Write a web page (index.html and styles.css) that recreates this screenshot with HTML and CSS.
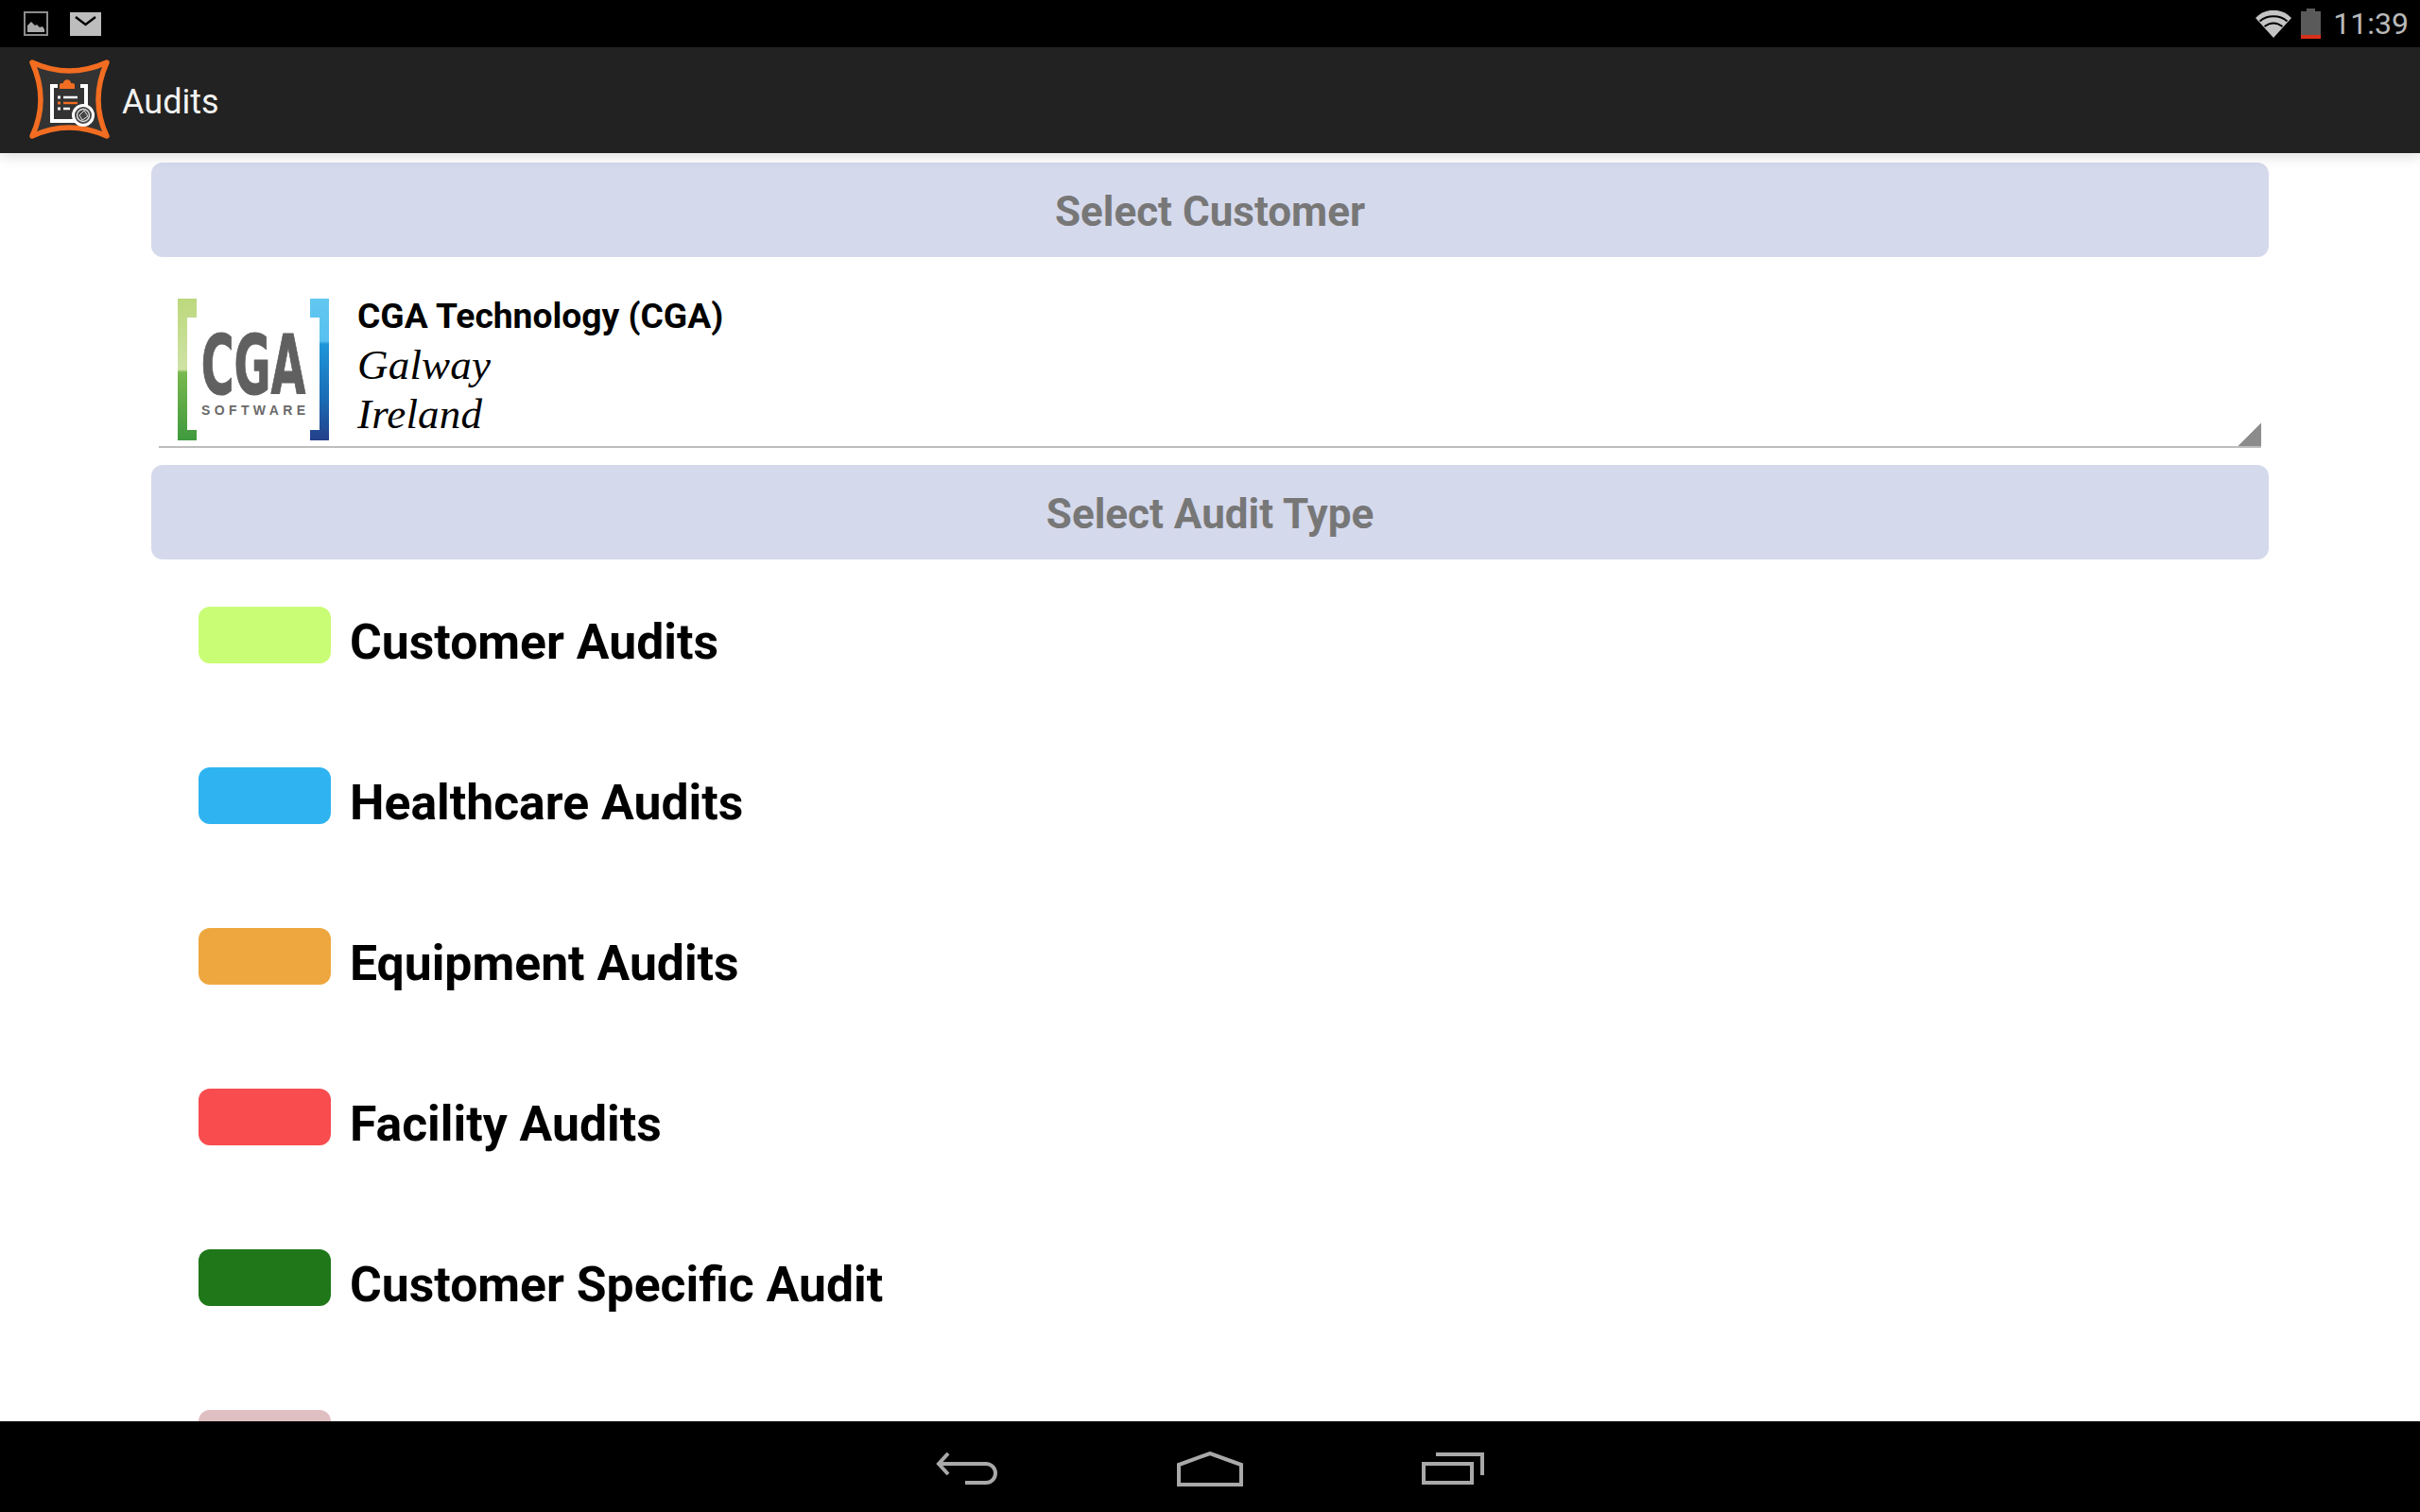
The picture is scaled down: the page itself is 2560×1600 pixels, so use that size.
FILE: index.html
```html
<!DOCTYPE html>
<html lang="en">
<head>
<meta charset="utf-8">
<title>Audits</title>
<link rel="stylesheet" href="styles.css">
</head>
<body>
<div class="screen">
  <header class="status">
    <div class="status-left">
      <svg class="ico-pic" viewBox="0 0 26 26"><rect x="1" y="1" width="24" height="24" fill="none" stroke="#8c8c8c" stroke-width="2"/><path d="M4 22v-7l4-4 4 4 2-1 3 3 3-1 2 3v3z" fill="#aaa"/></svg>
      <svg class="ico-mail" viewBox="0 0 33 25"><path d="M0 0h33v25H0z" fill="#bdbdbd"/><path d="M6 5l10.500 8L27 5" fill="none" stroke="#000" stroke-width="2.400"/></svg>
    </div>
    <div class="status-right">
      <svg class="ico-wifi" viewBox="0 0 38 29"><path d="M19 29L0 8c10-11 28-11 38 0z" fill="#c4c4c4"/><path d="M4.500 11.500c8-7 21-7 29 0M9.500 17c6-4.500 13-4.500 19 0" fill="none" stroke="#000" stroke-width="2"/></svg>
      <svg class="ico-batt" viewBox="0 0 21 32"><path d="M6 0h9v3h6v29H0V3h6z" fill="#5a5a5a"/><path d="M0 28h21v4H0z" fill="#d9301a"/></svg>
      <span class="clock">11:39</span>
    </div>
  </header>
  <div class="appbar">
    <svg class="app-icon" viewBox="0 0 86 86">
      <path d="M4 3Q43 21 83 3Q65 43 83 81Q43 63 4 81Q22 43 4 3z" fill="#333" stroke="#f26d21" stroke-width="5.500" stroke-linejoin="round"/>
      <path d="M31 28h-6v37h36V28h-6" fill="none" stroke="#fff" stroke-width="4"/>
      <path d="M33 31v-4c0-2 2-2 4-2 0-5 8-5 8 0 2 0 4 0 4 2v4z" fill="#f26d21"/>
      <path d="M31 38.500h3v3h-3zM31 50.500h3v3h-3z" fill="#fff"/><path d="M31 44.500h3v3h-3z" fill="#f26d21"/>
      <path d="M37 40h15M37 52h7" stroke="#fff" stroke-width="2.400"/><path d="M37 46h15" stroke="#f26d21" stroke-width="2.400"/>
      <circle cx="58" cy="59" r="10.500" fill="#444" stroke="#fff" stroke-width="3"/><circle cx="58" cy="59" r="6.500" fill="none" stroke="#ddd" stroke-width="1.400"/><path d="M54 59l5-5 4 6-6 4z" fill="none" stroke="#ddd" stroke-width="1"/>
    </svg>
    <span class="app-title">Audits</span>
  </div>
  <main class="content">
    <div class="band">Select Customer</div>
    <div class="spinner">
      <svg class="logo" viewBox="0 0 160 150">
        <defs>
          <linearGradient id="gl" x1="0" y1="0" x2="0" y2="1"><stop offset="0" stop-color="#bcd87c"/><stop offset=".5" stop-color="#cfe3a6"/><stop offset=".52" stop-color="#79b84e"/><stop offset="1" stop-color="#3f9a3e"/></linearGradient>
          <linearGradient id="gr" x1="0" y1="0" x2="0" y2="1"><stop offset="0" stop-color="#62c8f0"/><stop offset=".3" stop-color="#58c0f0"/><stop offset=".32" stop-color="#1f96da"/><stop offset=".7" stop-color="#1a6db5"/><stop offset="1" stop-color="#243f8a"/></linearGradient>
        </defs>
        <path d="M0 0h20v20H10v119h10v11H0z" fill="url(#gl)"/>
        <path d="M160 0h-20v20h10v119h-10v11h20z" fill="url(#gr)"/>
        <text class="logo-cga" transform="translate(80 101) scale(1.080 2)" text-anchor="middle">CGA</text>
        <text class="logo-soft" x="80" y="123" text-anchor="middle" textLength="110">SOFTWARE</text>
      </svg>
      <div class="cust-text">
        <div class="cust-name">CGA Technology (CGA)</div>
        <div class="cust-line">Galway</div>
        <div class="cust-line">Ireland</div>
      </div>
      <span class="spin-arrow"></span>
    </div>
    <div class="band band-second">Select Audit Type</div>
    <ul class="audits">
      <li class="audit"><span class="swatch c-lime"></span><span class="audit-name">Customer Audits</span></li>
      <li class="audit"><span class="swatch c-blue"></span><span class="audit-name">Healthcare Audits</span></li>
      <li class="audit"><span class="swatch c-orange"></span><span class="audit-name">Equipment Audits</span></li>
      <li class="audit"><span class="swatch c-red"></span><span class="audit-name">Facility Audits</span></li>
      <li class="audit"><span class="swatch c-green"></span><span class="audit-name">Customer Specific Audit</span></li>
      <li class="audit"><span class="swatch c-pink"></span></li>
    </ul>
  </main>
  <nav class="navbar">
    <svg class="nav-back" viewBox="0 0 66 34"><path d="M13 1L3 12l10 11M3 12h50a9.500 9.500 0 0 1 0 20H31" fill="none" stroke="#a9a9a9" stroke-width="4"/></svg>
    <svg class="nav-home" viewBox="0 0 70 37"><path d="M2 35V14L35 2l33 12v21z" fill="none" stroke="#a9a9a9" stroke-width="4"/></svg>
    <svg class="nav-recent" viewBox="0 0 66 34"><path d="M2 12h51v20H2z" fill="none" stroke="#a9a9a9" stroke-width="4"/><path d="M15 2h49v22" fill="none" stroke="#a9a9a9" stroke-width="4"/></svg>
  </nav>
</div>
</body>
</html>
```
FILE: styles.css
```css
* { box-sizing: border-box; }
html, body { margin: 0; padding: 0; background: #fff; }
.screen { width: 2560px; height: 1600px; display: flex; flex-direction: column; overflow: hidden; font-family: Roboto, sans-serif; }

.status { height: 50px; flex: none; background: #000; display: flex; justify-content: space-between; align-items: center; padding: 0 12px 0 25px; }
.status-left { display: flex; align-items: center; gap: 23px; }
.ico-pic { width: 26px; height: 26px; }
.ico-mail { width: 33px; height: 25px; }
.status-right { display: flex; align-items: center; }
.ico-wifi { width: 38px; height: 29px; margin-right: 10px; }
.ico-batt { width: 21px; height: 32px; margin-right: 13px; }
.clock { font-size: 32px; color: #b9b9b9; font-weight: 400; }

.appbar { height: 112px; flex: none; background: #222; display: flex; align-items: center; padding-left: 30px; position: relative; box-shadow: 0 3px 14px rgba(0,0,0,.14); z-index: 1; }
.app-icon { width: 86px; height: 86px; }
.app-title { margin-left: 13px; padding-top: 3px; font-size: 36px; color: #f2f2f2; }

.content { flex: 1; min-height: 0; overflow: hidden; padding: 10px 160px 0; }
.band { height: 100px; padding-top: 3px; border-radius: 12px; background: #d5d9ec; color: #777; font-size: 44px; font-weight: 700; display: flex; align-items: center; justify-content: center; }
.band-second { margin-top: 18px; }

.spinner { height: 202px; margin: 0 8px; border-bottom: 2px solid #bdbdbd; display: flex; align-items: flex-end; padding: 0 0 6px 20px; position: relative; }
.spin-arrow { position: absolute; right: 0; bottom: 0; width: 24px; height: 24px; background: linear-gradient(to bottom right, transparent 50%, #8c8c8c 50%); }
.logo { width: 160px; height: 150px; flex: none; }
.logo-cga { font-family: "DejaVu Sans", sans-serif; font-weight: 700; font-size: 44px; fill: #606060; stroke: #606060; stroke-width: .6px; stroke-linejoin: round; }
.logo-soft { font-family: "Liberation Sans", sans-serif; font-weight: 700; font-size: 14px; fill: #6a6a6a; }
.cust-text { margin-left: 30px; align-self: flex-end; padding-bottom: 2px; }
.cust-name { font-size: 37.200px; font-weight: 700; color: #000; line-height: 50px; margin-bottom: 1px; }
.cust-line { font-family: "Liberation Serif", serif; font-style: italic; font-size: 45px; letter-spacing: .2px; color: #000; line-height: 52px; }

.audits { list-style: none; margin: 0; padding: 50px 0 0 50px; }
.audit { height: 170px; display: flex; align-items: flex-start; }
.swatch { width: 140px; height: 60px; border-radius: 12px; flex: none; }
.audit-name { margin-left: 20px; font-size: 51.700px; font-weight: 700; color: #000; line-height: 75px; }
.c-lime { background: #c9fd75; }
.c-blue { background: #2fb4f1; }
.c-orange { background: #eea73f; }
.c-red { background: #f84c4f; }
.c-green { background: #1f7719; }
.c-pink { background: #e0bfc2; }

.navbar { height: 96px; flex: none; background: #000; display: flex; align-items: center; justify-content: center; padding-top: 4px; }
.nav-back { width: 66px; height: 34px; }
.nav-home { width: 70px; height: 37px; margin: 0 189px; }
.nav-recent { width: 66px; height: 34px; }
```
